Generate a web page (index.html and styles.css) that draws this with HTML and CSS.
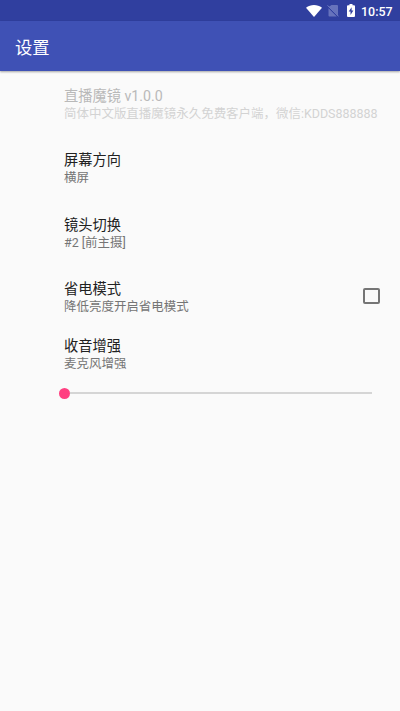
FILE: index.html
```html
<!DOCTYPE html>
<html lang="zh-CN">
<head>
<meta charset="utf-8">
<title>设置</title>
<link rel="stylesheet" href="styles.css">
</head>
<body>
<div class="status">
  <svg class="wifi" viewBox="0 0 16 12"><path d="M0 2.8C4.6-.8 11.4-.8 16 2.8L8 12z" fill="#fff"/></svg>
  <svg class="sim" viewBox="0 0 12 13"><path d="M4.5 1H10q1 0 1 1v9.5L2 2.8zM1.5 4.3L9.8 12.5H2.5q-1 0-1-1z" fill="#6773bc"/><path d="M.6 1.4L11.6 12.4" stroke="#7480c4" stroke-width="1"/></svg>
  <svg class="battery" viewBox="0 0 8 13"><path d="M2.5 0h3v1.2H7q1 0 1 1V12q0 1-1 1H1q-1 0-1-1V2.2q0-1 1-1h1.5z" fill="#fff"/><path d="M4.6 3.2L1.7 7.6h1.8v3.5l2.9-4.6H4.6z" fill="#303f9f"/></svg>
  <span class="time">10:57</span>
</div>
<header class="appbar"><h1>设置</h1></header>
<main class="list">
  <section class="item disabled">
    <div class="name">直播魔镜 v1.0.0</div>
    <div class="summary">简体中文版直播魔镜永久免费客户端，微信:KDDS888888</div>
  </section>
  <section class="item">
    <div class="name">屏幕方向</div>
    <div class="summary">横屏</div>
  </section>
  <section class="item">
    <div class="name">镜头切换</div>
    <div class="summary">#2 [前主摄]</div>
  </section>
  <section class="item with-widget">
    <div>
      <div class="name">省电模式</div>
      <div class="summary">降低亮度开启省电模式</div>
    </div>
    <span class="checkbox"></span>
  </section>
  <section class="item boost">
    <div class="name">收音增强</div>
    <div class="summary">麦克风增强</div>
    <div class="slider"><span class="thumb"></span><span class="track"></span></div>
  </section>
</main>
</body>
</html>
```

FILE: styles.css
```css
* { box-sizing: border-box; }
body {
  margin: 0;
  height: 711px;
  overflow: hidden;
  background: #fafafa;
  font-family: Roboto, "Noto Sans CJK SC", sans-serif;
}
.status {
  display: flex;
  align-items: center;
  height: 21px;
  padding-left: 306px;
  background: #303f9f;
}
.wifi { width: 16px; height: 12px; }
.sim { width: 12px; height: 13px; margin-left: 5px; }
.battery { width: 8px; height: 13px; margin-left: 8px; }
.time {
  margin-left: 6px;
  padding-top: 2px;
  color: #fff;
  font-size: 12.44px;
  font-weight: 500;
  line-height: 20px;
}
.appbar {
  display: flex;
  align-items: center;
  height: 50px;
  padding-left: 15px;
  background: #3f51b5;
  box-shadow: 0 1px 2px rgba(0, 0, 0, .35);
}
.appbar h1 {
  margin: 0;
  padding-top: 3px;
  color: #fff;
  font-size: 17.3px;
  font-weight: 400;
  line-height: 26px;
}
.list { padding: 15px 0 0 64px; }
.item {
  height: 64.4px;
  color: #212121;
  white-space: nowrap;
}
.name { font-size: 14.22px; line-height: 20px; }
.summary { color: #757575; font-size: 12.48px; line-height: 16px; }
.disabled .name { color: #b9b9b9; }
.disabled .summary { color: #d3d3d3; }
.with-widget {
  display: flex;
  align-items: flex-start;
  justify-content: space-between;
  height: 57px;
  padding-right: 20px;
}
.checkbox {
  width: 17px;
  height: 16px;
  margin-top: 9px;
  border: 2px solid #757575;
  border-radius: 2px;
}
.slider {
  display: flex;
  align-items: center;
  width: 313px;
  height: 12px;
  margin: 15px 0 0 -5px;
}
.thumb {
  width: 11px;
  height: 11px;
  border-radius: 50%;
  background: #ff4081;
}
.track { flex: 1; height: 2px; background: #d5d5d5; }
```
